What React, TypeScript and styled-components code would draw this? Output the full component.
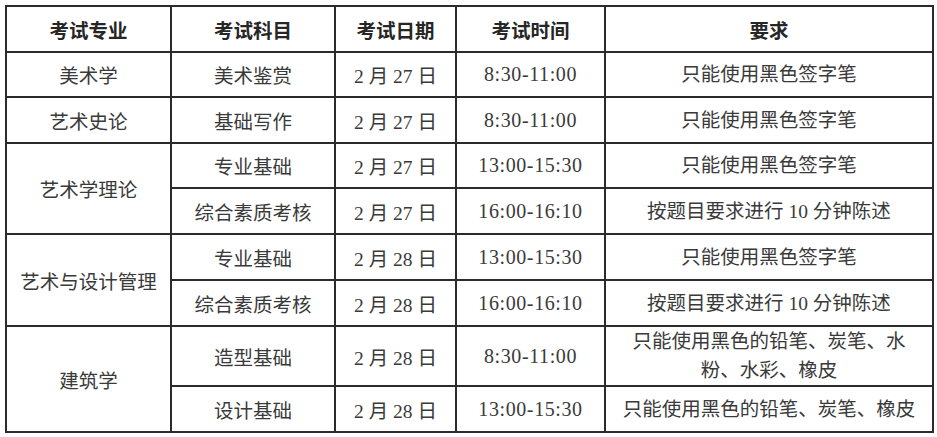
import React from "react";
import styled, { createGlobalStyle } from "styled-components";

const GlobalStyle = createGlobalStyle`
    html, body {
        margin: 0;
        padding: 0;
        background: #ffffff;
    }
`;

type Exam = {
    subject: string;
    date: string;
    time: string;
    rule: React.ReactNode;
    height: number;
};

type Major = {
    name: string;
    exams: Exam[];
};

const SIGN_PEN = "只能使用黑色签字笔";
const TALK = "按题目要求进行 10 分钟陈述";

const majors: Major[] = [
    {
        name: "美术学",
        exams: [{ subject: "美术鉴赏", date: "2 月 27 日", time: "8:30-11:00", rule: SIGN_PEN, height: 45 }],
    },
    {
        name: "艺术史论",
        exams: [{ subject: "基础写作", date: "2 月 27 日", time: "8:30-11:00", rule: SIGN_PEN, height: 46 }],
    },
    {
        name: "艺术学理论",
        exams: [
            { subject: "专业基础", date: "2 月 27 日", time: "13:00-15:30", rule: SIGN_PEN, height: 45 },
            { subject: "综合素质考核", date: "2 月 27 日", time: "16:00-16:10", rule: TALK, height: 46 },
        ],
    },
    {
        name: "艺术与设计管理",
        exams: [
            { subject: "专业基础", date: "2 月 28 日", time: "13:00-15:30", rule: SIGN_PEN, height: 46 },
            { subject: "综合素质考核", date: "2 月 28 日", time: "16:00-16:10", rule: TALK, height: 46 },
        ],
    },
    {
        name: "建筑学",
        exams: [
            {
                subject: "造型基础",
                date: "2 月 28 日",
                time: "8:30-11:00",
                rule: (
                    <>
                        只能使用黑色的铅笔、炭笔、水
                        <br />
                        粉、水彩、橡皮
                    </>
                ),
                height: 60,
            },
            { subject: "设计基础", date: "2 月 28 日", time: "13:00-15:30", rule: "只能使用黑色的铅笔、炭笔、橡皮", height: 46 },
        ],
    },
];

const headers = ["考试专业", "考试科目", "考试日期", "考试时间", "要求"];
const colWidths = [165, 164, 121, 149, 328];

export default function App() {
    return (
        <>
            <GlobalStyle />
            <Page>
                <ScheduleTable>
                    <colgroup>
                        {colWidths.map((w, idx) => (
                            <col key={idx} style={{ width: w }} />
                        ))}
                    </colgroup>
                    <thead>
                        <Row $height={46}>
                            {headers.map((h) => (
                                <HeadCell key={h}>{h}</HeadCell>
                            ))}
                        </Row>
                    </thead>
                    <tbody>
                        {majors.map((major) =>
                            major.exams.map((exam, idx) => (
                                <Row key={major.name + idx} $height={exam.height}>
                                    {idx === 0 && (
                                        <Cell rowSpan={major.exams.length}>{major.name}</Cell>
                                    )}
                                    <Cell>{exam.subject}</Cell>
                                    <Cell>{exam.date}</Cell>
                                    <TimeCell>{exam.time}</TimeCell>
                                    <RuleCell>{exam.rule}</RuleCell>
                                </Row>
                            ))
                        )}
                    </tbody>
                </ScheduleTable>
            </Page>
        </>
    );
}

const Page = styled.div`
    padding: 5px 0 0 5px;
    width: 937px;
    height: 437px;
    box-sizing: border-box;
`;

const ScheduleTable = styled.table`
    border-collapse: collapse;
    table-layout: fixed;
    width: 927px;
`;

const Row = styled.tr<{ $height: number }>`
    height: ${({ $height }) => $height}px;
`;

const HeadCell = styled.th`
    border: 2px solid #2b2b2b;
    padding: 0;
    text-align: center;
    vertical-align: middle;
    font-family: "Noto Sans CJK SC", sans-serif;
    font-size: 19.5px;
    font-weight: 700;
    color: #262626;
`;

const Cell = styled.td`
    border: 2px solid #2b2b2b;
    padding: 0;
    text-align: center;
    vertical-align: middle;
    font-family: "Liberation Serif", "Noto Sans CJK SC", serif;
    font-size: 19.5px;
    font-weight: 400;
    color: #3a3a3a;
    white-space: nowrap;
`;

const TimeCell = styled(Cell)`
    font-size: 20px;
    letter-spacing: 0.6px;
`;

const RuleCell = styled(Cell)`
    line-height: 29px;
`;
